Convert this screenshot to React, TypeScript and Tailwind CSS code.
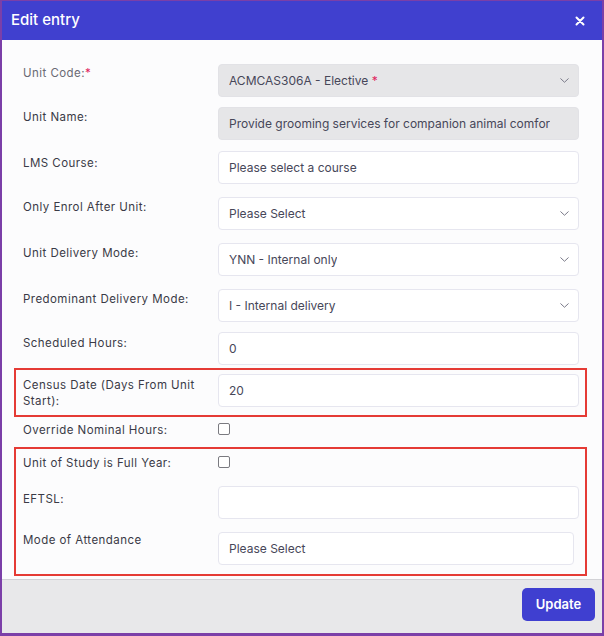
import React from "react";

const font = { fontFamily: 'Inter, "Noto Sans", sans-serif' };

function Chevron() {
  return (
    <svg width="9" height="5" viewBox="0 0 9 5" className="shrink-0">
      <path d="M0.75 0.75l3.75 3.5 3.75-3.5" fill="none" stroke="#7a7a88" strokeWidth="1" strokeLinecap="round" strokeLinejoin="round" />
    </svg>
  );
}

function Field({
  children,
  disabled,
  select,
  narrow,
}: {
  children?: React.ReactNode;
  disabled?: boolean;
  select?: boolean;
  narrow?: boolean;
}) {
  return (
    <div
      className={
        "h-[33px] shrink-0 flex items-center justify-between pl-[10px] pr-[9px] rounded-[4px] border text-[12px] text-[#474759] " +
        (disabled ? "bg-[#e6e6e8] border-[#e2e2e6] " : "bg-white border-[#e6e6ef] ") +
        (narrow ? "w-[356px]" : "w-[361px]")
      }
    >
      <span className="whitespace-nowrap overflow-hidden">{children}</span>
      {select && <Chevron />}
    </div>
  );
}

const labelCls = "w-[195px] shrink-0 text-[11.5px] tracking-[0.45px] leading-[16px] ";

function Row({
  label,
  children,
  labelPt = "pt-[2px]",
  className = "",
  color = "text-[#3a3a46]",
}: {
  label: React.ReactNode;
  children: React.ReactNode;
  labelPt?: string;
  className?: string;
  color?: string;
}) {
  return (
    <div className={"flex items-start pl-[7px] " + className}>
      <div className={labelCls + color + " " + labelPt}>{label}</div>
      {children}
    </div>
  );
}

function Checkbox() {
  return <div className="w-[12px] h-[12px] rounded-[2px] border border-[#7a7a80] bg-white" />;
}

export default function App() {
  return (
    <div
      className="w-[604px] h-[636px] flex flex-col border-l-2 border-r-2 border-t border-b-[3px] border-[#7b3fa8] bg-[#fcfcfd]"
      style={font}
    >
      <div className="h-[39px] shrink-0 bg-[#4040cf] flex items-center justify-between pl-[9px] pr-[17px]">
        <span className="text-white text-[15px] font-medium">Edit entry</span>
        <svg width="10" height="10" viewBox="0 0 10 10">
          <path d="M1.5 1.5l7 7M8.5 1.5l-7 7" stroke="white" strokeWidth="2" strokeLinecap="round" />
        </svg>
      </div>

      <div className="flex-1 min-h-0 pt-[24px] pl-[12px] pr-[15px] flex flex-col">
        <div className="border-2 border-transparent -mt-[2px] pb-[1px]">
          <Row
            label={<>Unit Code:<span className="text-[#e0245e]">*</span></>}
            labelPt="pt-[1px]"
            color="text-[#6a6a74]"
          >
            <Field disabled select>
              ACMCAS306A - Elective <span className="text-[#e0245e]">*</span>
            </Field>
          </Row>
          <Row label="Unit Name:" className="mt-[10px]">
            <Field disabled>Provide grooming services for companion animal comfor</Field>
          </Row>
          <Row label="LMS Course:" className="mt-[11px]" labelPt="pt-[4px]">
            <Field>Please select a course</Field>
          </Row>
          <Row label="Only Enrol After Unit:" className="mt-[13px]">
            <Field select>Please Select</Field>
          </Row>
          <Row label="Unit Delivery Mode:" className="mt-[13px]">
            <Field select>YNN - Internal only</Field>
          </Row>
          <Row label="Predominant Delivery Mode:" className="mt-[13px]">
            <Field select>I - Internal delivery</Field>
          </Row>
          <Row label="Scheduled Hours:" className="mt-[10px]" labelPt="pt-[3px]">
            <Field>0</Field>
          </Row>
        </div>

        <div className="border-2 border-[#e53b35] pt-[4px] pb-[6px]">
          <Row label={<>Census Date (Days From Unit<br />Start):</>} labelPt="pt-[3px]">
            <Field>20</Field>
          </Row>
        </div>

        <div className="flex items-start pl-[9px] mt-[6px] h-[24px]">
          <div className={labelCls + "text-[#3a3a46] -mt-[1px]"}>Override Nominal Hours:</div>
          <Checkbox />
        </div>

        <div className="border-2 border-[#e53b35] pt-[7px] pb-[9px]">
          <div className="flex items-start pl-[7px] h-[22px]">
            <div className={labelCls + "text-[#3a3a46] -mt-[1px]"}>Unit of Study is Full Year:</div>
            <Checkbox />
          </div>
          <Row label="EFTSL:" className="mt-[8px]" labelPt="pt-[5px]">
            <Field />
          </Row>
          <Row label="Mode of Attendance" className="mt-[13px]" labelPt="pt-[0px]">
            <Field narrow>Please Select</Field>
          </Row>
        </div>
      </div>

      <div className="h-[54px] shrink-0 bg-[#e8e8ea] border-t border-[#d2d2d6] flex items-start justify-end pt-[8px] pr-[7px]">
        <button className="w-[73px] h-[33px] rounded-[5px] bg-[#3f3fd0] text-white text-[13px] font-semibold">
          Update
        </button>
      </div>
    </div>
  );
}
